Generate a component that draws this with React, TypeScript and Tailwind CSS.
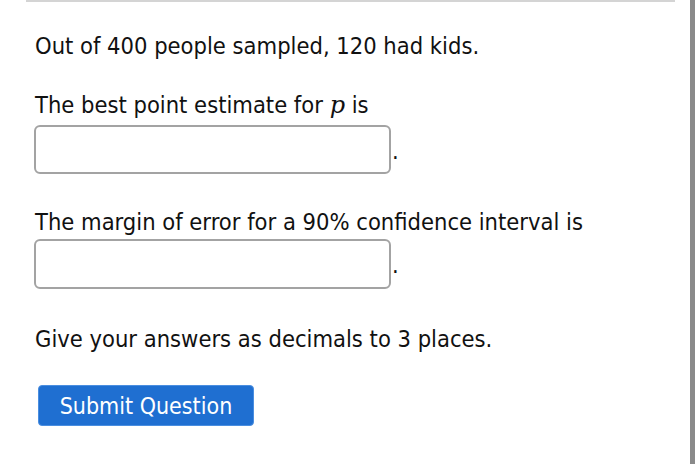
import React from "react";

export default function App() {
  return (
    <div className="flex h-[464px] w-[700px] bg-white text-[#111]">
      <div className="w-[690px] shrink-0">
        <div className="ml-[26px] mr-[15px] h-[2px] bg-[#d4d4d4]" />
        <div className="pl-[35px] pt-[31px] font-['DejaVu_Sans_Condensed','DejaVu_Sans',sans-serif] text-[23.5px] leading-[27px]">
          <p>Out of 400 people sampled, 120 had kids.</p>
          <p className="mt-[32px]">
            The best point estimate for{" "}
            <span className="font-['DejaVu_Serif',serif] text-[24px] italic">p</span> is
          </p>
          <div className="ml-[-1px] mt-[6px] flex items-start">
            <div className="h-[49px] w-[357px] rounded-[6px] border-2 border-[#a3a3a3] bg-white" />
            <span className="ml-[1px] mt-[13px]">.</span>
          </div>
          <p className="mt-[35px]">The margin of error for a 90% confidence interval is</p>
          <div className="ml-[-1px] mt-[3px] flex items-start">
            <div className="h-[50px] w-[357px] rounded-[6px] border-2 border-[#a3a3a3] bg-white" />
            <span className="ml-[1px] mt-[13px]">.</span>
          </div>
          <p className="mt-[37px]">Give your answers as decimals to 3 places.</p>
          <button className="ml-[3px] mt-[32px] flex h-[41px] w-[216px] items-center justify-center rounded-[4px] border border-[#4a8ee0] bg-[#1f6fd1] pt-[2px] text-[23px] text-white">
            Submit Question
          </button>
        </div>
      </div>
      <div className="w-[5px] shrink-0 bg-[#8a8a8a]" />
      <div className="flex-1 bg-white" />
    </div>
  );
}
